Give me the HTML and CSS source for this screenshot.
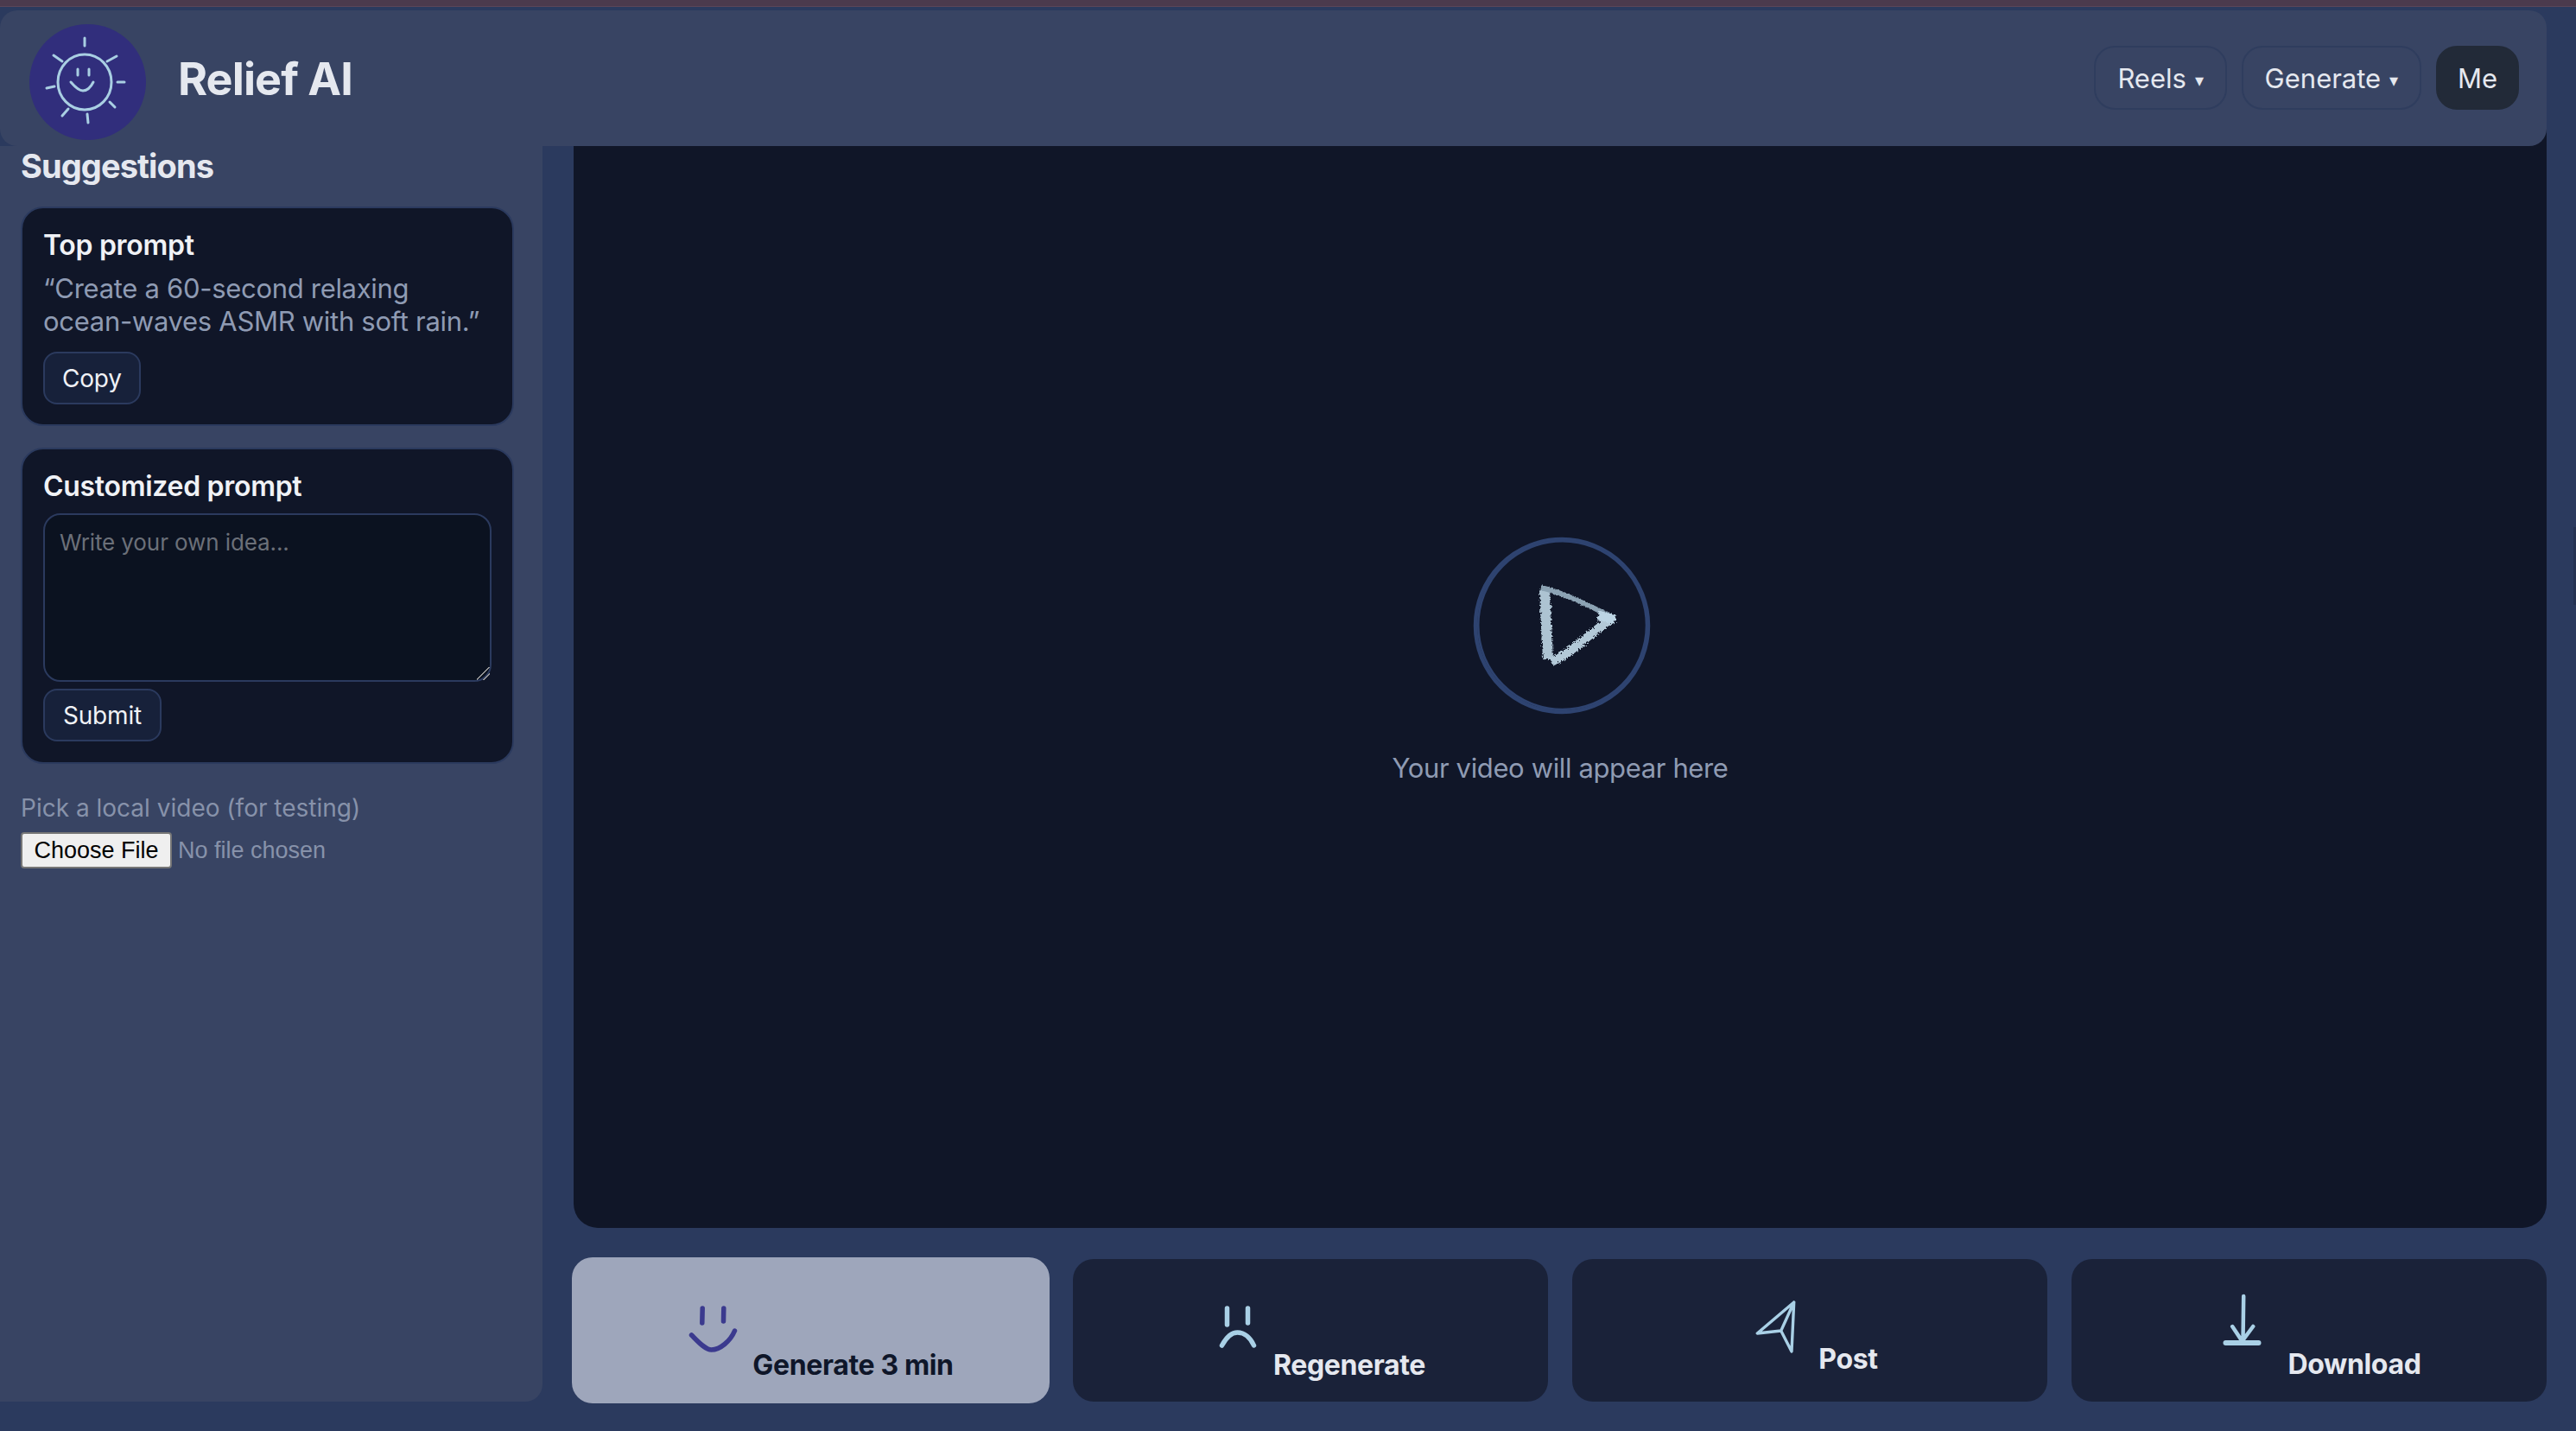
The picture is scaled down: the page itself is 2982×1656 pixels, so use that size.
FILE: index.html
```
<!DOCTYPE html>
<html lang="en">
<head>
<meta charset="utf-8">
<title>Relief AI</title>
<link rel="stylesheet" href="styles.css">
</head>
<body>
<div class="strip"></div>
<header class="header">
  <svg class="logo" viewBox="0 0 160 160" fill="none" stroke-linecap="round">
    <ellipse cx="81.5" cy="84" rx="67.5" ry="67" fill="#312e7c"/>
    <g stroke="#a9cfe3" stroke-width="3">
      <ellipse cx="78" cy="84" rx="31" ry="32"/>
      <path d="M78 33L78 42M104 60L115 54M116 84L124 84M107 107L113 113M81 121L82 131M52 123L59 115M34 91L43 89M42 53L52 60"/>
      <path d="M70 69V76M83 69V76M62 84C68 91 72 94 76 94C81 94 85 90 88 84"/>
    </g>
  </svg>
  <h1 class="brand">Relief AI</h1>
  <nav class="nav">
    <button class="nav-btn">Reels <span class="caret">▾</span></button>
    <button class="nav-btn">Generate <span class="caret">▾</span></button>
    <button class="nav-btn nav-me">Me</button>
  </nav>
</header>
<div class="content">
  <aside class="sidebar">
    <h2 class="side-title">Suggestions</h2>
    <section class="card card-top">
      <h3 class="card-title">Top prompt</h3>
      <p class="prompt">“Create a 60-second relaxing ocean-waves ASMR with soft rain.”</p>
      <button class="small-btn">Copy</button>
    </section>
    <section class="card card-custom">
      <h3 class="card-title">Customized prompt</h3>
      <textarea class="idea" placeholder="Write your own idea..."></textarea>
      <button class="small-btn">Submit</button>
    </section>
    <label class="pick-label" for="file">Pick a local video (for testing)</label>
    <input class="file" id="file" type="file">
  </aside>
  <main class="main">
    <div class="video">
      <svg class="play" viewBox="0 0 216 216" fill="none">
        <defs>
          <filter id="chalk" x="-20%" y="-20%" width="140%" height="140%">
            <feTurbulence type="fractalNoise" baseFrequency="0.45" numOctaves="2" seed="4"/>
            <feDisplacementMap in="SourceGraphic" scale="6"/>
          </filter>
        </defs>
        <circle cx="108" cy="108" r="100" stroke="#2e4370" stroke-width="4.5"/>
        <circle cx="108.6" cy="107.6" r="97.4" stroke="#2e4370" stroke-width="2.6"/>
        <g filter="url(#chalk)">
          <path d="M88 67L92 147" stroke="#adc3d2" stroke-width="12"/>
          <path d="M84 64C110 70 140 85 166 98" stroke="#8ca3b4" stroke-width="6"/>
          <path d="M166 100C145 112 120 140 96 150" stroke="#b3c9d8" stroke-width="10"/>
          <path d="M150 96L170 101" stroke="#bcd5e5" stroke-width="11"/>
        </g>
      </svg>
      <p class="video-text">Your video will appear here</p>
    </div>
    <div class="actions">
      <button class="action action-active">
        <svg class="ico ico-a" viewBox="-2.5 0 90 100" fill="none" stroke="#3b3a8e" stroke-width="5.5" stroke-linecap="round"><path d="M37.7 24L37.3 41M62.3 24L62 39M25 55C33 63 41 72 48 72C58 72 70 62 75 50"/></svg>
        <span class="label label-low">Generate 3 min</span>
      </button>
      <button class="action">
        <svg class="ico ico-b" viewBox="-1.5 0 82 100" fill="none" stroke="#a9d0e6" stroke-width="5.5" stroke-linecap="round"><path d="M35 24V43M59 24V41M29 67C35 56 42 52 47 52C55 52 62 58 66 67"/></svg>
        <span class="label label-low">Regenerate</span>
      </button>
      <button class="action">
        <svg class="ico ico-c" viewBox="0 0 81 100" fill="none" stroke="#a9d0e6" stroke-width="3.4" stroke-linejoin="round" stroke-linecap="round"><path d="M60.7 17L18.3 53L45.7 50L58 74ZM45.7 50L60.7 17"/></svg>
        <span class="label label-mid">Post</span>
      </button>
      <button class="action">
        <svg class="ico ico-d" viewBox="-3.5 0 97 100" fill="none" stroke="#a9d0e6" stroke-width="4.5" stroke-linecap="round"><path d="M49.7 10L49 62M36.7 45L48 62L60.7 45"/><path d="M29 64H67" stroke-width="6"/></svg>
        <span class="label label-dl">Download</span>
      </button>
    </div>
  </main>
</div>
<div class="edge"></div>
</body>
</html>
```
FILE: styles.css
```
* { box-sizing: border-box; }
html, body { margin: 0; height: 1656px; overflow: hidden; }
body {
  background: #2b3a5e;
  color: #e5e8ef;
  font-family: Inter, "Liberation Sans", sans-serif;
  position: relative;
}
button { font-family: inherit; cursor: pointer; }
h1, h2, h3, p { margin: 0; }

.strip { height: 8px; background: #4b3a4d; border-bottom: 1px solid #5a4658; }

.header {
  position: relative;
  z-index: 2;
  height: 157px;
  margin: 4px 34px 0 0;
  padding: 0 32px 0 20px;
  display: flex;
  align-items: center;
  background: #384463;
  border-radius: 20px;
}
.logo { width: 160px; height: 160px; flex: none; }
.brand { margin-left: 26px; padding-top: 2px; font-size: 52px; font-weight: 700; line-height: 60px; letter-spacing: -0.9px; }
.nav { margin-left: auto; margin-top: -1px; display: flex; gap: 17px; }
.nav-btn {
  height: 74px;
  padding: 0 25px;
  font-size: 31px;
  color: #e5e8ef;
  background: transparent;
  border: 2px solid #2f3d5e;
  border-radius: 24px;
}
.caret { font-size: 20px; margin-left: 1px; position: relative; top: -2px; }
.nav-me { padding: 0 23px; background: #222a38; border-color: #222a38; }

.content {
  display: grid;
  grid-template-columns: 628px 1fr;
  gap: 36px;
  height: 1453px;
  padding-right: 34px;
}

.sidebar {
  background: #384463;
  border-radius: 0 0 20px 0;
  padding: 0 33px 0 24px;
}
.side-title { font-size: 38px; font-weight: 700; line-height: 46px; margin-bottom: 24px; letter-spacing: -0.9px; }
.card {
  background: #101628;
  border: 2px solid #2b3a5e;
  border-radius: 26px;
  padding: 0 24px;
}
.card-top { height: 254px; padding-top: 24px; margin-bottom: 25px; }
.card-custom { height: 366px; padding-top: 24px; margin-bottom: 33px; }
.card-title { font-size: 32px; font-weight: 600; line-height: 38px; color: #f0f2f6; letter-spacing: -0.3px; }
.prompt { margin-top: 12px; font-size: 31px; line-height: 38px; letter-spacing: -0.3px; color: #8f9bb3; }
.small-btn {
  display: block;
  height: 61px;
  padding: 0 20px;
  margin-top: 16px;
  font-size: 28px;
  letter-spacing: -0.2px;
  color: #f0f2f6;
  background: #17213a;
  border: 2px solid #2b3a5e;
  border-radius: 16px;
}
.idea {
  display: block;
  width: 100%;
  height: 195px;
  margin-top: 12px;
  padding: 16px 17px;
  font-family: inherit;
  font-size: 26px;
  letter-spacing: -0.1px;
  color: #e5e8ef;
  background: #0b1220;
  border: 2px solid #2b3a5e;
  border-radius: 20px;
  outline: none;
}
.idea::placeholder { color: #6b7079; }
.idea::-webkit-resizer {
  background: linear-gradient(135deg, transparent 45%, #999 45% 53%, transparent 53% 72%, #999 72% 80%, transparent 80%);
}
.card-custom .small-btn { margin-top: 8px; padding: 0 21px; }
.pick-label { display: block; font-size: 28px; line-height: 36px; color: #8792aa; }
.file {
  display: block;
  margin-top: 10px;
  width: 500px;
  font-family: "Liberation Sans", sans-serif;
  font-size: 27px;
  color: #8792aa;
}
.file::file-selector-button {
  height: 42px;
  width: 175px;
  margin-right: 7px;
  padding: 0;
  font: 27px "Liberation Sans", sans-serif;
  color: #000;
  background: #efefef;
  border: 2px solid #767676;
  border-radius: 4px;
}

.main { margin-top: -64px; display: flex; flex-direction: column; }
.video {
  height: 1316px;
  padding-bottom: 2px;
  background: #101628;
  border-radius: 0 0 28px 28px;
  display: flex;
  flex-direction: column;
  align-items: center;
  justify-content: center;
}
.play { width: 216px; height: 216px; margin-left: 4px; }
.video-text { margin-top: 38px; font-size: 31px; line-height: 38px; letter-spacing: -0.37px; color: #8f9bb3; }

.actions {
  margin-top: 36px;
  display: grid;
  grid-template-columns: repeat(4, 1fr);
  gap: 28px;
}
.action {
  height: 165px;
  padding: 0;
  display: flex;
  align-items: center;
  justify-content: center;
  gap: 8px;
  background: #1a2239;
  color: #e5e8ef;
  border: 0;
  border-radius: 24px;
}
.action-active {
  height: 169px;
  margin: -2px -1px -2px -2px;
  background: #9ea6bb;
  color: #0f1629;
}
.ico { height: 100px; flex: none; }
.ico-a { width: 90px; }
.ico-b { width: 82px; }
.ico-c { width: 81px; }
.ico-d { width: 97px; }
.label { font-size: 32px; font-weight: 700; line-height: 38px; letter-spacing: -0.35px; white-space: nowrap; }
.label-low { margin-top: 80px; }
.label-mid { margin-top: 66px; }
.label-dl { margin-top: 78px; }

.edge {
  position: absolute;
  right: 0;
  top: 610px;
  width: 3px;
  height: 90px;
  background: #253252;
}
```
